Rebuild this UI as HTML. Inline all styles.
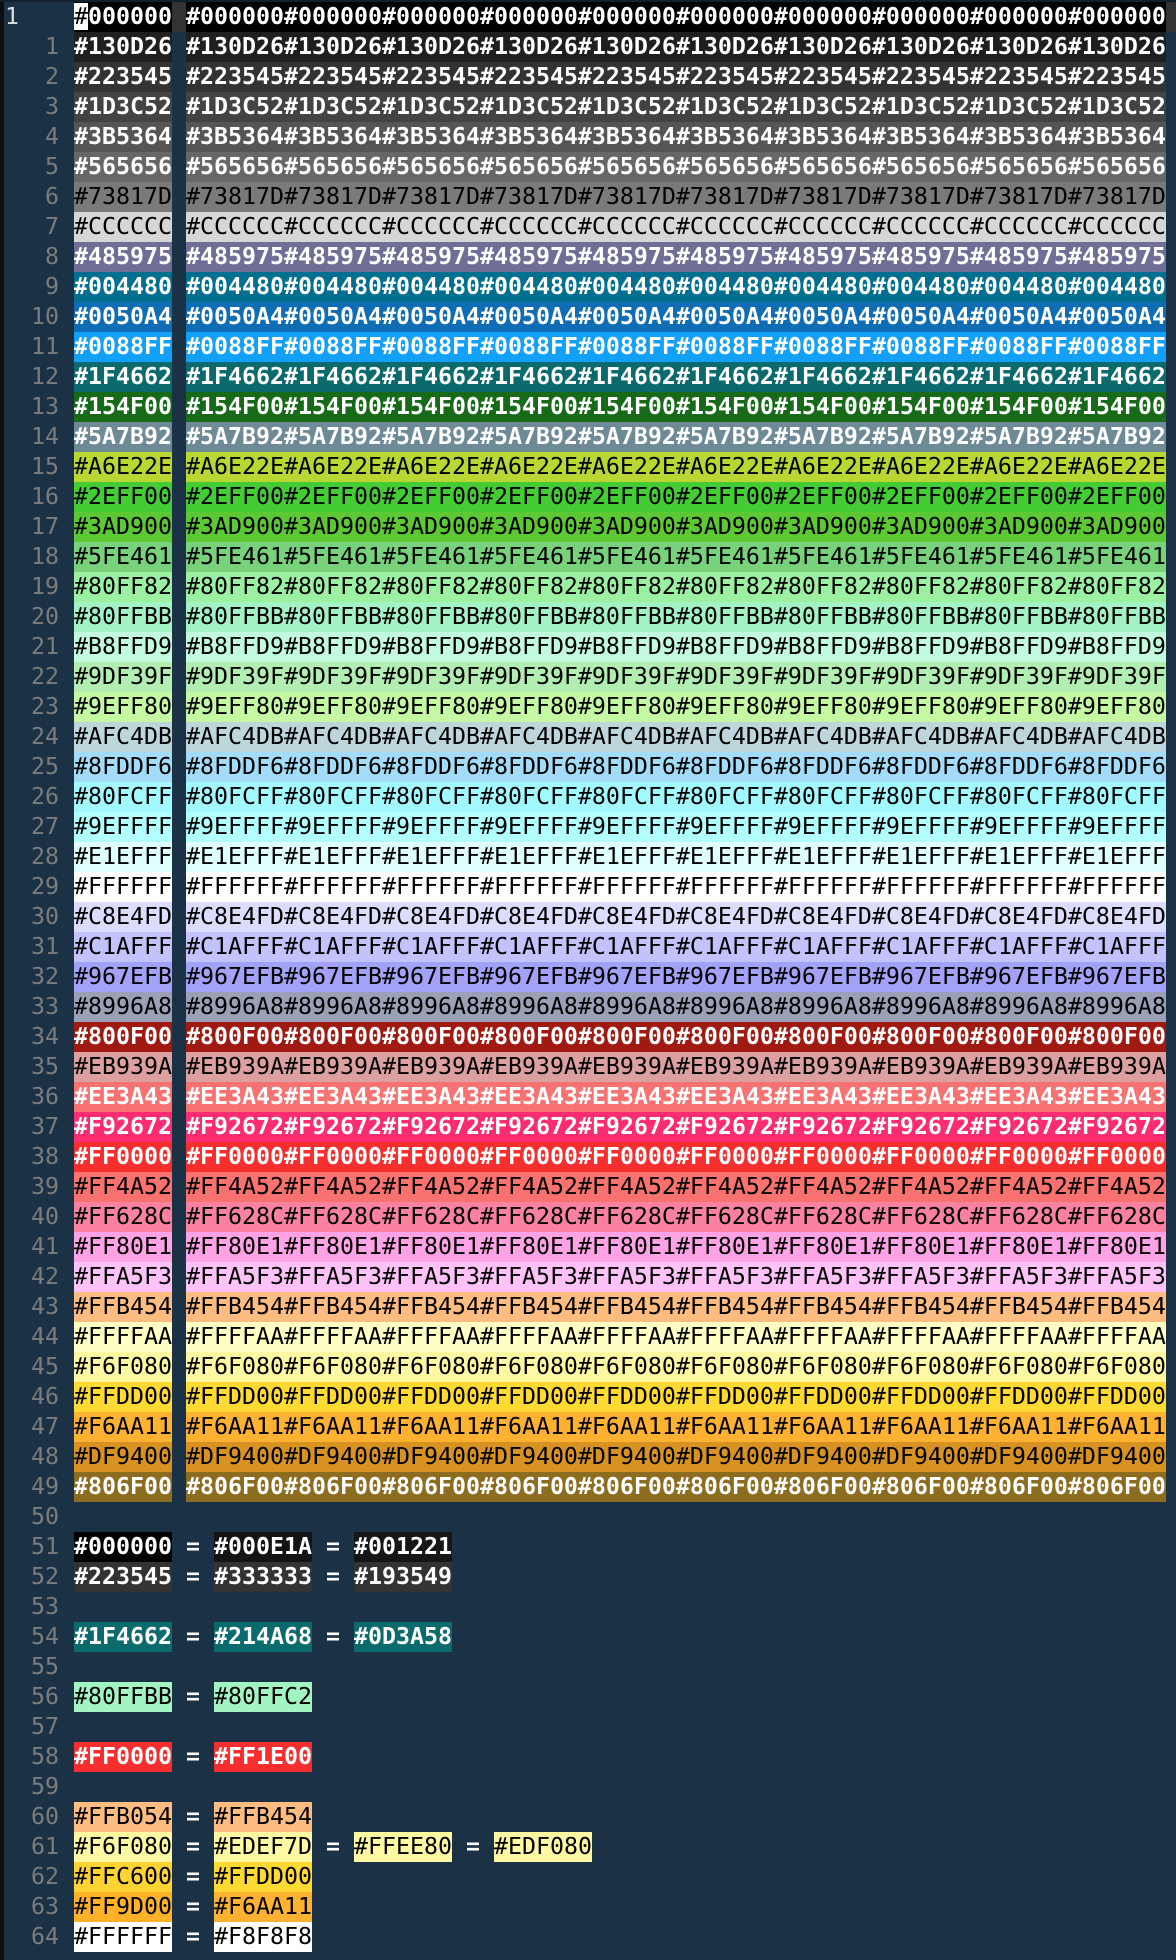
<!DOCTYPE html>
<html><head><meta charset="utf-8">
<style>
html,body{margin:0;padding:0;}
body{width:1176px;height:1960px;background:#1b3246;position:relative;overflow:hidden;font-family:"DejaVu Sans Mono","Liberation Mono",monospace;font-size:23.25px;}
#ls{position:absolute;left:0;top:0;width:4px;height:1960px;background:#0e0e10;}
#tp{position:absolute;left:0;top:0;width:1176px;height:2px;background:#10202c;}
.r{position:absolute;left:0;height:30px;width:1176px;line-height:30px;white-space:pre;}
.n{position:absolute;left:0;width:59px;text-align:right;color:#7c7c7c;}
.s{position:absolute;top:0;height:30px;overflow:hidden;}
.a{left:74px;}
.b{left:186px;}
.w{color:#fff;font-weight:bold}.k{color:#000}
.e{position:absolute;top:0;color:#fff;font-weight:bold}
</style></head><body>
<div id="ls"></div><div id="tp"></div>

<div class="r" style="top:2px"><span style="position:absolute;left:5px;color:#dcdcdc">1</span><span class="s" style="left:172px;width:1004px;background:#333"></span><span class="s a w" style="background:#000"><span style="background:#fff;color:#000;font-weight:normal">#</span>000000</span><span class="s b w" style="background:#000">#000000#000000#000000#000000#000000#000000#000000#000000#000000#000000</span></div>
<div class="r" style="top:32px"><span class="n">1</span><span class="s a w" style="background:#1f1f1f">#130D26</span><span class="s b w" style="background:#1f1f1f">#130D26#130D26#130D26#130D26#130D26#130D26#130D26#130D26#130D26#130D26</span></div>
<div class="r" style="top:62px"><span class="n">2</span><span class="s a w" style="background:#333333">#223545</span><span class="s b w" style="background:#333333">#223545#223545#223545#223545#223545#223545#223545#223545#223545#223545</span></div>
<div class="r" style="top:92px"><span class="n">3</span><span class="s a w" style="background:#434343">#1D3C52</span><span class="s b w" style="background:#434343">#1D3C52#1D3C52#1D3C52#1D3C52#1D3C52#1D3C52#1D3C52#1D3C52#1D3C52#1D3C52</span></div>
<div class="r" style="top:122px"><span class="n">4</span><span class="s a w" style="background:#555555">#3B5364</span><span class="s b w" style="background:#555555">#3B5364#3B5364#3B5364#3B5364#3B5364#3B5364#3B5364#3B5364#3B5364#3B5364</span></div>
<div class="r" style="top:152px"><span class="n">5</span><span class="s a w" style="background:#676767">#565656</span><span class="s b w" style="background:#676767">#565656#565656#565656#565656#565656#565656#565656#565656#565656#565656</span></div>
<div class="r" style="top:182px"><span class="n">6</span><span class="s a k" style="background:#7a7a7a">#73817D</span><span class="s b k" style="background:#7a7a7a">#73817D#73817D#73817D#73817D#73817D#73817D#73817D#73817D#73817D#73817D</span></div>
<div class="r" style="top:212px"><span class="n">7</span><span class="s a k" style="background:#d6d6d6">#CCCCCC</span><span class="s b k" style="background:#d6d6d6">#CCCCCC#CCCCCC#CCCCCC#CCCCCC#CCCCCC#CCCCCC#CCCCCC#CCCCCC#CCCCCC#CCCCCC</span></div>
<div class="r" style="top:242px"><span class="n">8</span><span class="s a w" style="background:#6e6e96">#485975</span><span class="s b w" style="background:#6e6e96">#485975#485975#485975#485975#485975#485975#485975#485975#485975#485975</span></div>
<div class="r" style="top:272px"><span class="n">9</span><span class="s a w" style="background:#006f90">#004480</span><span class="s b w" style="background:#006f90">#004480#004480#004480#004480#004480#004480#004480#004480#004480#004480</span></div>
<div class="r" style="top:302px"><span class="n">10</span><span class="s a w" style="background:#0e6db4">#0050A4</span><span class="s b w" style="background:#0e6db4">#0050A4#0050A4#0050A4#0050A4#0050A4#0050A4#0050A4#0050A4#0050A4#0050A4</span></div>
<div class="r" style="top:332px"><span class="n">11</span><span class="s a w" style="background:#12a0f8">#0088FF</span><span class="s b w" style="background:#12a0f8">#0088FF#0088FF#0088FF#0088FF#0088FF#0088FF#0088FF#0088FF#0088FF#0088FF</span></div>
<div class="r" style="top:362px"><span class="n">12</span><span class="s a w" style="background:#0a6a6c">#1F4662</span><span class="s b w" style="background:#0a6a6c">#1F4662#1F4662#1F4662#1F4662#1F4662#1F4662#1F4662#1F4662#1F4662#1F4662</span></div>
<div class="r" style="top:392px"><span class="n">13</span><span class="s a w" style="background:#166a18">#154F00</span><span class="s b w" style="background:#166a18">#154F00#154F00#154F00#154F00#154F00#154F00#154F00#154F00#154F00#154F00</span></div>
<div class="r" style="top:422px"><span class="n">14</span><span class="s a w" style="background:#6e8a96">#5A7B92</span><span class="s b w" style="background:#6e8a96">#5A7B92#5A7B92#5A7B92#5A7B92#5A7B92#5A7B92#5A7B92#5A7B92#5A7B92#5A7B92</span></div>
<div class="r" style="top:452px"><span class="n">15</span><span class="s a k" style="background:#bad632">#A6E22E</span><span class="s b k" style="background:#bad632">#A6E22E#A6E22E#A6E22E#A6E22E#A6E22E#A6E22E#A6E22E#A6E22E#A6E22E#A6E22E</span></div>
<div class="r" style="top:482px"><span class="n">16</span><span class="s a k" style="background:#44cc34">#2EFF00</span><span class="s b k" style="background:#44cc34">#2EFF00#2EFF00#2EFF00#2EFF00#2EFF00#2EFF00#2EFF00#2EFF00#2EFF00#2EFF00</span></div>
<div class="r" style="top:512px"><span class="n">17</span><span class="s a k" style="background:#5cc834">#3AD900</span><span class="s b k" style="background:#5cc834">#3AD900#3AD900#3AD900#3AD900#3AD900#3AD900#3AD900#3AD900#3AD900#3AD900</span></div>
<div class="r" style="top:542px"><span class="n">18</span><span class="s a k" style="background:#78d27c">#5FE461</span><span class="s b k" style="background:#78d27c">#5FE461#5FE461#5FE461#5FE461#5FE461#5FE461#5FE461#5FE461#5FE461#5FE461</span></div>
<div class="r" style="top:572px"><span class="n">19</span><span class="s a k" style="background:#9cf0a2">#80FF82</span><span class="s b k" style="background:#9cf0a2">#80FF82#80FF82#80FF82#80FF82#80FF82#80FF82#80FF82#80FF82#80FF82#80FF82</span></div>
<div class="r" style="top:602px"><span class="n">20</span><span class="s a k" style="background:#a2f2c4">#80FFBB</span><span class="s b k" style="background:#a2f2c4">#80FFBB#80FFBB#80FFBB#80FFBB#80FFBB#80FFBB#80FFBB#80FFBB#80FFBB#80FFBB</span></div>
<div class="r" style="top:632px"><span class="n">21</span><span class="s a k" style="background:#c2fade">#B8FFD9</span><span class="s b k" style="background:#c2fade">#B8FFD9#B8FFD9#B8FFD9#B8FFD9#B8FFD9#B8FFD9#B8FFD9#B8FFD9#B8FFD9#B8FFD9</span></div>
<div class="r" style="top:662px"><span class="n">22</span><span class="s a k" style="background:#b2eeb2">#9DF39F</span><span class="s b k" style="background:#b2eeb2">#9DF39F#9DF39F#9DF39F#9DF39F#9DF39F#9DF39F#9DF39F#9DF39F#9DF39F#9DF39F</span></div>
<div class="r" style="top:692px"><span class="n">23</span><span class="s a k" style="background:#c4f8a2">#9EFF80</span><span class="s b k" style="background:#c4f8a2">#9EFF80#9EFF80#9EFF80#9EFF80#9EFF80#9EFF80#9EFF80#9EFF80#9EFF80#9EFF80</span></div>
<div class="r" style="top:722px"><span class="n">24</span><span class="s a k" style="background:#bcd6dc">#AFC4DB</span><span class="s b k" style="background:#bcd6dc">#AFC4DB#AFC4DB#AFC4DB#AFC4DB#AFC4DB#AFC4DB#AFC4DB#AFC4DB#AFC4DB#AFC4DB</span></div>
<div class="r" style="top:752px"><span class="n">25</span><span class="s a k" style="background:#a2dcf8">#8FDDF6</span><span class="s b k" style="background:#a2dcf8">#8FDDF6#8FDDF6#8FDDF6#8FDDF6#8FDDF6#8FDDF6#8FDDF6#8FDDF6#8FDDF6#8FDDF6</span></div>
<div class="r" style="top:782px"><span class="n">26</span><span class="s a k" style="background:#a2f8ff">#80FCFF</span><span class="s b k" style="background:#a2f8ff">#80FCFF#80FCFF#80FCFF#80FCFF#80FCFF#80FCFF#80FCFF#80FCFF#80FCFF#80FCFF</span></div>
<div class="r" style="top:812px"><span class="n">27</span><span class="s a k" style="background:#b2ffff">#9EFFFF</span><span class="s b k" style="background:#b2ffff">#9EFFFF#9EFFFF#9EFFFF#9EFFFF#9EFFFF#9EFFFF#9EFFFF#9EFFFF#9EFFFF#9EFFFF</span></div>
<div class="r" style="top:842px"><span class="n">28</span><span class="s a k" style="background:#e0ffff">#E1EFFF</span><span class="s b k" style="background:#e0ffff">#E1EFFF#E1EFFF#E1EFFF#E1EFFF#E1EFFF#E1EFFF#E1EFFF#E1EFFF#E1EFFF#E1EFFF</span></div>
<div class="r" style="top:872px"><span class="n">29</span><span class="s a k" style="background:#ffffff">#FFFFFF</span><span class="s b k" style="background:#ffffff">#FFFFFF#FFFFFF#FFFFFF#FFFFFF#FFFFFF#FFFFFF#FFFFFF#FFFFFF#FFFFFF#FFFFFF</span></div>
<div class="r" style="top:902px"><span class="n">30</span><span class="s a k" style="background:#dcdcfc">#C8E4FD</span><span class="s b k" style="background:#dcdcfc">#C8E4FD#C8E4FD#C8E4FD#C8E4FD#C8E4FD#C8E4FD#C8E4FD#C8E4FD#C8E4FD#C8E4FD</span></div>
<div class="r" style="top:932px"><span class="n">31</span><span class="s a k" style="background:#c2c2fc">#C1AFFF</span><span class="s b k" style="background:#c2c2fc">#C1AFFF#C1AFFF#C1AFFF#C1AFFF#C1AFFF#C1AFFF#C1AFFF#C1AFFF#C1AFFF#C1AFFF</span></div>
<div class="r" style="top:962px"><span class="n">32</span><span class="s a k" style="background:#a2a2f8">#967EFB</span><span class="s b k" style="background:#a2a2f8">#967EFB#967EFB#967EFB#967EFB#967EFB#967EFB#967EFB#967EFB#967EFB#967EFB</span></div>
<div class="r" style="top:992px"><span class="n">33</span><span class="s a k" style="background:#9aa0b6">#8996A8</span><span class="s b k" style="background:#9aa0b6">#8996A8#8996A8#8996A8#8996A8#8996A8#8996A8#8996A8#8996A8#8996A8#8996A8</span></div>
<div class="r" style="top:1022px"><span class="n">34</span><span class="s a w" style="background:#a01a12">#800F00</span><span class="s b w" style="background:#a01a12">#800F00#800F00#800F00#800F00#800F00#800F00#800F00#800F00#800F00#800F00</span></div>
<div class="r" style="top:1052px"><span class="n">35</span><span class="s a k" style="background:#dca0a0">#EB939A</span><span class="s b k" style="background:#dca0a0">#EB939A#EB939A#EB939A#EB939A#EB939A#EB939A#EB939A#EB939A#EB939A#EB939A</span></div>
<div class="r" style="top:1082px"><span class="n">36</span><span class="s a w" style="background:#f87272">#EE3A43</span><span class="s b w" style="background:#f87272">#EE3A43#EE3A43#EE3A43#EE3A43#EE3A43#EE3A43#EE3A43#EE3A43#EE3A43#EE3A43</span></div>
<div class="r" style="top:1112px"><span class="n">37</span><span class="s a w" style="background:#fc2c70">#F92672</span><span class="s b w" style="background:#fc2c70">#F92672#F92672#F92672#F92672#F92672#F92672#F92672#F92672#F92672#F92672</span></div>
<div class="r" style="top:1142px"><span class="n">38</span><span class="s a w" style="background:#f62e2e">#FF0000</span><span class="s b w" style="background:#f62e2e">#FF0000#FF0000#FF0000#FF0000#FF0000#FF0000#FF0000#FF0000#FF0000#FF0000</span></div>
<div class="r" style="top:1172px"><span class="n">39</span><span class="s a k" style="background:#fa7270">#FF4A52</span><span class="s b k" style="background:#fa7270">#FF4A52#FF4A52#FF4A52#FF4A52#FF4A52#FF4A52#FF4A52#FF4A52#FF4A52#FF4A52</span></div>
<div class="r" style="top:1202px"><span class="n">40</span><span class="s a k" style="background:#fa82a0">#FF628C</span><span class="s b k" style="background:#fa82a0">#FF628C#FF628C#FF628C#FF628C#FF628C#FF628C#FF628C#FF628C#FF628C#FF628C</span></div>
<div class="r" style="top:1232px"><span class="n">41</span><span class="s a k" style="background:#ffa2e6">#FF80E1</span><span class="s b k" style="background:#ffa2e6">#FF80E1#FF80E1#FF80E1#FF80E1#FF80E1#FF80E1#FF80E1#FF80E1#FF80E1#FF80E1</span></div>
<div class="r" style="top:1262px"><span class="n">42</span><span class="s a k" style="background:#ffc2f8">#FFA5F3</span><span class="s b k" style="background:#ffc2f8">#FFA5F3#FFA5F3#FFA5F3#FFA5F3#FFA5F3#FFA5F3#FFA5F3#FFA5F3#FFA5F3#FFA5F3</span></div>
<div class="r" style="top:1292px"><span class="n">43</span><span class="s a k" style="background:#ffbc80">#FFB454</span><span class="s b k" style="background:#ffbc80">#FFB454#FFB454#FFB454#FFB454#FFB454#FFB454#FFB454#FFB454#FFB454#FFB454</span></div>
<div class="r" style="top:1322px"><span class="n">44</span><span class="s a k" style="background:#ffffc4">#FFFFAA</span><span class="s b k" style="background:#ffffc4">#FFFFAA#FFFFAA#FFFFAA#FFFFAA#FFFFAA#FFFFAA#FFFFAA#FFFFAA#FFFFAA#FFFFAA</span></div>
<div class="r" style="top:1352px"><span class="n">45</span><span class="s a k" style="background:#fff8a2">#F6F080</span><span class="s b k" style="background:#fff8a2">#F6F080#F6F080#F6F080#F6F080#F6F080#F6F080#F6F080#F6F080#F6F080#F6F080</span></div>
<div class="r" style="top:1382px"><span class="n">46</span><span class="s a k" style="background:#ffda32">#FFDD00</span><span class="s b k" style="background:#ffda32">#FFDD00#FFDD00#FFDD00#FFDD00#FFDD00#FFDD00#FFDD00#FFDD00#FFDD00#FFDD00</span></div>
<div class="r" style="top:1412px"><span class="n">47</span><span class="s a k" style="background:#ffb232">#F6AA11</span><span class="s b k" style="background:#ffb232">#F6AA11#F6AA11#F6AA11#F6AA11#F6AA11#F6AA11#F6AA11#F6AA11#F6AA11#F6AA11</span></div>
<div class="r" style="top:1442px"><span class="n">48</span><span class="s a k" style="background:#d89222">#DF9400</span><span class="s b k" style="background:#d89222">#DF9400#DF9400#DF9400#DF9400#DF9400#DF9400#DF9400#DF9400#DF9400#DF9400</span></div>
<div class="r" style="top:1472px"><span class="n">49</span><span class="s a w" style="background:#8c6c1e">#806F00</span><span class="s b w" style="background:#8c6c1e">#806F00#806F00#806F00#806F00#806F00#806F00#806F00#806F00#806F00#806F00</span></div>

<div class="r" style="top:1502px"><span class="n">50</span></div>
<div class="r" style="top:1532px"><span class="n">51</span><span class="s w" style="left:74px;background:#000">#000000</span><span class="e" style="left:186px">=</span><span class="s w" style="left:214px;background:#141414">#000E1A</span><span class="e" style="left:326px">=</span><span class="s w" style="left:354px;background:#161616">#001221</span></div>
<div class="r" style="top:1562px"><span class="n">52</span><span class="s w" style="left:74px;background:#333">#223545</span><span class="e" style="left:186px">=</span><span class="s w" style="left:214px;background:#333">#333333</span><span class="e" style="left:326px">=</span><span class="s w" style="left:354px;background:#333">#193549</span></div>
<div class="r" style="top:1592px"><span class="n">53</span></div>
<div class="r" style="top:1622px"><span class="n">54</span><span class="s w" style="left:74px;background:#0a6a6c">#1F4662</span><span class="e" style="left:186px">=</span><span class="s w" style="left:214px;background:#0a6a6c">#214A68</span><span class="e" style="left:326px">=</span><span class="s w" style="left:354px;background:#0a6a6c">#0D3A58</span></div>
<div class="r" style="top:1652px"><span class="n">55</span></div>
<div class="r" style="top:1682px"><span class="n">56</span><span class="s k" style="left:74px;background:#a2f4c2">#80FFBB</span><span class="e" style="left:186px">=</span><span class="s k" style="left:214px;background:#a2f4c2">#80FFC2</span></div>
<div class="r" style="top:1712px"><span class="n">57</span></div>
<div class="r" style="top:1742px"><span class="n">58</span><span class="s w" style="left:74px;background:#f62e2e">#FF0000</span><span class="e" style="left:186px">=</span><span class="s w" style="left:214px;background:#f62e2e">#FF1E00</span></div>
<div class="r" style="top:1772px"><span class="n">59</span></div>
<div class="r" style="top:1802px"><span class="n">60</span><span class="s k" style="left:74px;background:#ffbc80">#FFB054</span><span class="e" style="left:186px">=</span><span class="s k" style="left:214px;background:#ffbc80">#FFB454</span></div>
<div class="r" style="top:1832px"><span class="n">61</span><span class="s k" style="left:74px;background:#fff8a2">#F6F080</span><span class="e" style="left:186px">=</span><span class="s k" style="left:214px;background:#fff8a2">#EDEF7D</span><span class="e" style="left:326px">=</span><span class="s k" style="left:354px;background:#fff8a2">#FFEE80</span><span class="e" style="left:466px">=</span><span class="s k" style="left:494px;background:#fff8a2">#EDF080</span></div>
<div class="r" style="top:1862px"><span class="n">62</span><span class="s k" style="left:74px;background:#ffd432">#FFC600</span><span class="e" style="left:186px">=</span><span class="s k" style="left:214px;background:#ffda32">#FFDD00</span></div>
<div class="r" style="top:1892px"><span class="n">63</span><span class="s k" style="left:74px;background:#ffb228">#FF9D00</span><span class="e" style="left:186px">=</span><span class="s k" style="left:214px;background:#ffb232">#F6AA11</span></div>
<div class="r" style="top:1922px"><span class="n">64</span><span class="s k" style="left:74px;background:#fff">#FFFFFF</span><span class="e" style="left:186px">=</span><span class="s k" style="left:214px;background:#fff">#F8F8F8</span></div>
</body></html>
